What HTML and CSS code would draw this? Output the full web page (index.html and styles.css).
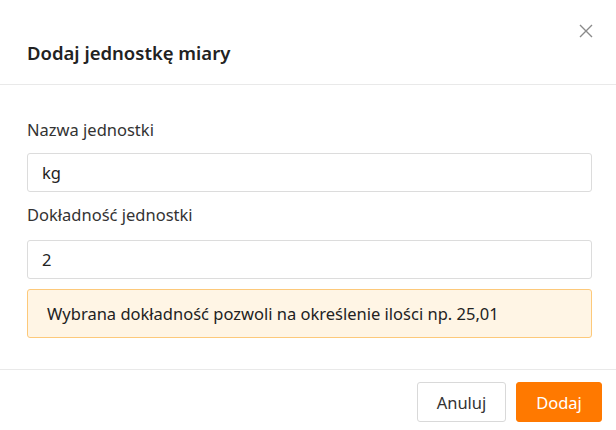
FILE: index.html
```html
<!DOCTYPE html>
<html lang="pl">
<head>
<meta charset="utf-8">
<link rel="stylesheet" href="styles.css">
</head>
<body>
<div class="modal">
  <div class="modal-header">
    <h2 class="modal-title">Dodaj jednostkę miary</h2>
    <button class="close" aria-label="Zamknij">
      <svg width="14" height="14" viewBox="0 0 14 14"><path d="M1 1L13 13M13 1L1 13" stroke="#8a8a8a" stroke-width="1.4" fill="none"/></svg>
    </button>
  </div>
  <div class="modal-body">
    <label class="label">Nazwa jednostki</label>
    <div class="input">kg</div>
    <label class="label label-2">Dokładność jednostki</label>
    <div class="input">2</div>
    <div class="alert">Wybrana dokładność pozwoli na określenie ilości np. 25,01</div>
  </div>
  <div class="modal-footer">
    <button class="btn btn-default">Anuluj</button>
    <button class="btn btn-primary">Dodaj</button>
  </div>
</div>
</body>
</html>
```
FILE: styles.css
```css
* { box-sizing: border-box; }
html, body { margin: 0; padding: 0; background: #fff; }
body {
  font-family: "Noto Sans", "Open Sans", sans-serif;
  color: #333;
  width: 616px;
  height: 430px;
  overflow: hidden;
}
.modal { width: 616px; }
.modal-header {
  height: 85px;
  border-bottom: 1px solid #e9e9e9;
  position: relative;
  display: flex;
  align-items: center;
  padding: 0 27px;
}
.modal-title {
  margin: 0;
  padding-top: 21px;
  font-size: 18.5px;
  font-weight: 600;
  color: #222;
}
.close {
  position: absolute;
  top: 24px;
  right: 23px;
  border: 0;
  background: none;
  padding: 0;
  width: 14px;
  height: 14px;
  display: block;
}
.close svg { display: block; }
.modal-body {
  padding: 34px 24px 31px 27px;
  display: flex;
  flex-direction: column;
}
.label {
  font-size: 16.5px;
  line-height: 22px;
  color: #333;
  margin-bottom: 12px;
}
.label-2 { margin-top: 12px; margin-bottom: 14px; }
.input {
  height: 39px;
  border: 1px solid #dcdcdc;
  border-radius: 3px;
  padding: 0 14px;
  display: flex;
  align-items: center;
  font-size: 16.5px;
  color: #222;
}
.alert {
  margin-top: 10px;
  height: 49px;
  background: #fff5e5;
  border: 1px solid #fdc97a;
  border-radius: 3px;
  padding: 0 19px;
  display: flex;
  align-items: center;
  font-size: 16.5px;
  color: #222;
}
.modal-footer {
  border-top: 1px solid #e9e9e9;
  padding: 12px 14px 0 0;
  display: flex;
  justify-content: flex-end;
  gap: 10px;
}
.btn {
  height: 40px;
  border-radius: 3px;
  font-family: inherit;
  font-size: 16.5px;
  padding: 0;
  cursor: pointer;
}
.btn-default {
  width: 89px;
  background: #fff;
  border: 1px solid #d9d9d9;
  color: #333;
}
.btn-primary {
  width: 86px;
  background: #ff7900;
  border: 1px solid #ff7900;
  color: #fff;
}
```
